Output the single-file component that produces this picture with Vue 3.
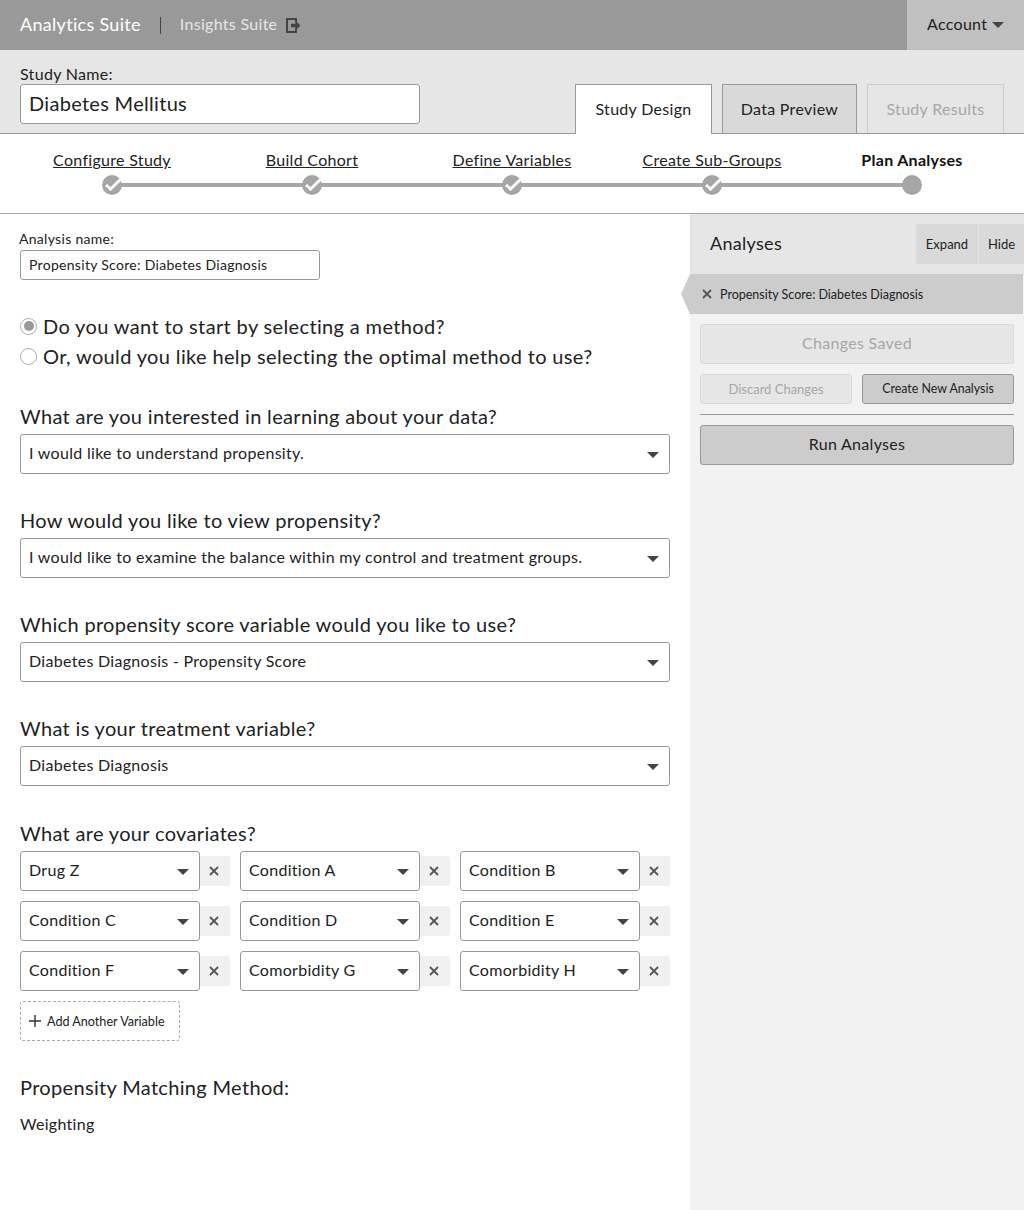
<template>
  <div class="page">
    <header class="topbar">
      <span class="brand">Analytics Suite</span>
      <span class="divider"></span>
      <a class="suite-link">Insights Suite</a>
      <svg class="exit-icon" width="15" height="15" viewBox="0 0 15 15">
        <path d="M10 4.500V1H1v13h9v-3.500" fill="none" stroke="#444" stroke-width="2" />
        <path d="M5 5.800h4.500V2.800L14.500 7.500l-5 4.700V9.200H5z" fill="#444" />
      </svg>
      <div class="account">Account <span class="account-caret"></span></div>
    </header>

    <section class="study-bar">
      <div class="study-name">
        <label>Study Name:</label>
        <div class="study-input">Diabetes Mellitus</div>
      </div>
      <nav class="tabs">
        <div v-for="tab in tabs" :key="tab.label" class="tab" :class="tab.kind">{{ tab.label }}</div>
      </nav>
    </section>

    <section class="stepper">
      <div v-for="(step, i) in steps" :key="step" class="step" :class="{ current: i === steps.length - 1 }">
        <span class="step-label">{{ step }}</span>
        <span class="step-dot">
          <svg v-if="i < steps.length - 1" width="20" height="20" viewBox="0 0 20 20">
            <path d="M4 10l4.500 4 10-9.500" fill="none" stroke="#fff" stroke-width="3" />
          </svg>
        </span>
      </div>
    </section>

    <div class="main">
      <section class="form">
        <label class="small-label">Analysis name:</label>
        <div class="name-input">Propensity Score: Diabetes Diagnosis</div>

        <div class="radios">
          <div class="radio-row"><span class="radio on"></span>Do you want to start by selecting a method?</div>
          <div class="radio-row"><span class="radio"></span>Or, would you like help selecting the optimal method to use?</div>
        </div>

        <div v-for="q in questions" :key="q.label" class="question">
          <div class="q-label">{{ q.label }}</div>
          <div class="select">
            <span>{{ q.value }}</span>
            <span class="caret"></span>
          </div>
        </div>

        <div class="q-label covariate-label">What are your covariates?</div>
        <div class="covariates">
          <div v-for="c in covariates" :key="c" class="covariate">
            <div class="select">
              <span>{{ c }}</span>
              <span class="caret"></span>
            </div>
            <div class="remove">
              <svg width="10" height="10" viewBox="0 0 10 10">
                <path d="M1 1l8 8M9 1l-8 8" stroke="#555" stroke-width="1.800" />
              </svg>
            </div>
          </div>
        </div>
        <div class="add-var">
          <svg width="14" height="14" viewBox="0 0 14 14">
            <path d="M7 1v12M1 7h12" stroke="#333" stroke-width="1.400" />
          </svg>
          <span>Add Another Variable</span>
        </div>

        <div class="q-label method-label">Propensity Matching Method:</div>
        <div class="method-value">Weighting</div>
      </section>

      <aside class="sidebar">
        <div class="side-head">
          <span class="side-title">Analyses</span>
          <div class="side-btn expand">Expand</div>
          <div class="side-btn hide">Hide</div>
        </div>
        <div class="active-analysis">
          <svg width="10" height="10" viewBox="0 0 10 10">
            <path d="M1 1l8 8M9 1l-8 8" stroke="#555" stroke-width="1.800" />
          </svg>
          <span>Propensity Score: Diabetes Diagnosis</span>
        </div>
        <div class="side-body">
          <div class="btn big disabled">Changes Saved</div>
          <div class="btn-row">
            <div class="btn small disabled">Discard Changes</div>
            <div class="btn small create">Create New Analysis</div>
          </div>
          <div class="side-rule"></div>
          <div class="btn big">Run Analyses</div>
        </div>
      </aside>
    </div>
  </div>
</template>

<script setup>
const tabs = [
  { label: 'Study Design', kind: 'active' },
  { label: 'Data Preview', kind: 'normal' },
  { label: 'Study Results', kind: 'off' }
]

const steps = ['Configure Study', 'Build Cohort', 'Define Variables', 'Create Sub-Groups', 'Plan Analyses']

const questions = [
  { label: 'What are you interested in learning about your data?', value: 'I would like to understand propensity.' },
  { label: 'How would you like to view propensity?', value: 'I would like to examine the balance within my control and treatment groups.' },
  { label: 'Which propensity score variable would you like to use?', value: 'Diabetes Diagnosis - Propensity Score' },
  { label: 'What is your treatment variable?', value: 'Diabetes Diagnosis' }
]

const covariates = [
  'Drug Z', 'Condition A', 'Condition B',
  'Condition C', 'Condition D', 'Condition E',
  'Condition F', 'Comorbidity G', 'Comorbidity H'
]
</script>

<style>
body {
  margin: 0;
}
</style>

<style scoped>
.page {
  width: 1024px;
  height: 1210px;
  display: flex;
  flex-direction: column;
  overflow: hidden;
  font-family: Lato, "Liberation Sans", sans-serif;
  letter-spacing: 0.3px;
  color: #222;
  background: #fff;
}

.topbar {
  height: 50px;
  flex: none;
  display: flex;
  align-items: center;
  padding-left: 20px;
  background: #999;
}

.brand {
  font-size: 18px;
  color: #fff;
  margin-bottom: 2px;
}

.divider {
  width: 1px;
  height: 17px;
  margin: 0 19px;
  background: #444;
}

.suite-link {
  font-size: 16px;
  color: #e6e6e6;
  margin-bottom: 4px;
}

.exit-icon {
  margin-left: 9px;
}

.account {
  margin-left: auto;
  width: 117px;
  height: 50px;
  box-sizing: border-box;
  padding: 0 0 3px 20px;
  display: flex;
  align-items: center;
  gap: 5px;
  font-size: 16px;
  background: #c0c0c0;
}

.account-caret {
  margin-top: 3px;
  border-top: 6px solid #444;
  border-left: 6px solid transparent;
  border-right: 6px solid transparent;
}

.study-bar {
  height: 84px;
  flex: none;
  box-sizing: border-box;
  display: flex;
  justify-content: space-between;
  align-items: flex-end;
  padding: 0 20px;
  background: #e6e6e6;
  border-bottom: 1px solid #999;
}

.study-name {
  margin-bottom: 9px;
}

.study-name label {
  display: block;
  font-size: 16px;
  line-height: 20px;
}

.study-input {
  width: 400px;
  height: 40px;
  box-sizing: border-box;
  padding-left: 8px;
  line-height: 36px;
  font-size: 20px;
  background: #fff;
  border: 1px solid #999;
  border-radius: 3px;
}

.tabs {
  display: flex;
  gap: 10px;
}

.tab {
  width: 137px;
  height: 49px;
  box-sizing: border-box;
  text-align: center;
  line-height: 47px;
  font-size: 16px;
  border: 1px solid #999;
  border-bottom: none;
}

.tab.active {
  height: 50px;
  margin-bottom: -1px;
  background: #fff;
}

.tab.normal {
  width: 135px;
  background: #d9d9d9;
}

.tab.off {
  color: #a6a6a6;
  border-color: #ccc;
}

.stepper {
  height: 80px;
  flex: none;
  box-sizing: border-box;
  display: flex;
  padding: 15px 12px 0;
  border-bottom: 1px solid #aaa;
}

.step {
  position: relative;
  width: 200px;
  display: flex;
  flex-direction: column;
  align-items: center;
  gap: 4px;
}

.step-label {
  font-size: 16px;
  line-height: 22px;
  text-decoration: underline;
}

.step.current .step-label {
  font-weight: 700;
  color: #111;
  text-decoration: none;
}

.step-dot {
  position: relative;
  z-index: 1;
  width: 20px;
  height: 20px;
  border-radius: 50%;
  background: #a6a6a6;
}

.step-dot svg {
  display: block;
}

/* connector between two dots */
.step:not(.current)::after {
  content: '';
  position: absolute;
  top: 34px;
  left: 50%;
  width: 200px;
  height: 4px;
  background: #a6a6a6;
}

.main {
  flex: 1;
  display: flex;
  min-height: 0;
}

.form {
  width: 690px;
  flex: none;
  box-sizing: border-box;
  padding: 15px 20px 0;
}

.small-label {
  display: block;
  font-size: 14px;
  line-height: 19px;
  margin-bottom: 2px;
  margin-left: -1px;
}

.name-input {
  width: 300px;
  height: 30px;
  box-sizing: border-box;
  padding-left: 8px;
  line-height: 28px;
  font-size: 14px;
  border: 1px solid #999;
  border-radius: 3px;
}

.radios {
  margin: 31px 0 33px;
}

.radio-row {
  display: flex;
  align-items: center;
  gap: 6px;
  height: 30px;
  font-size: 20px;
  letter-spacing: 0.36px;
}

.radio {
  width: 15px;
  height: 15px;
  flex: none;
  border: 1px solid #aaa;
  border-radius: 50%;
  background: #fff;
  position: relative;
}

.radio.on::after {
  content: '';
  position: absolute;
  inset: 2.500px;
  border-radius: 50%;
  background: #999;
}

.question {
  height: 104px;
}

.q-label {
  font-size: 20px;
  line-height: 24px;
  margin-bottom: 6px;
  letter-spacing: 0.33px;
}

.select {
  height: 40px;
  box-sizing: border-box;
  display: flex;
  align-items: center;
  justify-content: space-between;
  padding: 0 10px 4px 8px;
  font-size: 16px;
  background: #fff;
  border: 1px solid #999;
  border-radius: 3px;
}

.caret {
  flex: none;
  margin-top: 6px;
  border-top: 6px solid #444;
  border-left: 6px solid transparent;
  border-right: 6px solid transparent;
}

.covariate-label {
  margin-top: 1px;
}

.covariates {
  display: grid;
  grid-template-columns: repeat(3, 210px);
  gap: 10px;
}

.covariate {
  display: flex;
  align-items: center;
}

.covariate .select {
  width: 180px;
  flex: none;
}

.remove {
  width: 30px;
  height: 30px;
  box-sizing: border-box;
  padding-right: 3px;
  display: flex;
  align-items: center;
  justify-content: center;
  background: #f0f0f0;
  border-radius: 0 3px 3px 0;
}

.add-var {
  width: 160px;
  height: 40px;
  box-sizing: border-box;
  margin-top: 10px;
  padding-left: 7px;
  display: flex;
  align-items: center;
  gap: 5px;
  font-size: 12.600px;
  letter-spacing: 0;
  border: 1px dashed #aaa;
  border-radius: 3px;
}

.method-label {
  margin: 34px 0 0;
}

.method-value {
  margin-top: 15px;
  font-size: 16px;
  line-height: 20px;
}

.sidebar {
  flex: 1;
  background: #f2f2f2;
}

.side-head {
  height: 60px;
  display: flex;
  align-items: center;
  padding-left: 20px;
  background: #e6e6e6;
}

.side-title {
  margin-right: auto;
  margin-bottom: 2px;
  font-size: 18px;
}

.side-btn {
  height: 40px;
  line-height: 40px;
  text-align: center;
  font-size: 13px;
  letter-spacing: 0;
  background: #d9d9d9;
}

.side-btn.expand {
  width: 62px;
  margin-right: 1px;
}

.side-btn.hide {
  width: 45px;
}

.active-analysis {
  height: 40px;
  margin-left: -9px;
  margin-right: 1px;
  display: flex;
  align-items: center;
  gap: 8px;
  padding-left: 21px;
  font-size: 12.500px;
  letter-spacing: 0;
  background: #ccc;
  clip-path: polygon(9px 0, 100% 0, 100% 100%, 9px 100%, 0 50%);
}

.side-body {
  padding: 10px 10px 0;
}

.btn {
  box-sizing: border-box;
  text-align: center;
  background: #ccc;
  border: 1px solid #999;
  border-radius: 3px;
}

.btn.big {
  height: 40px;
  line-height: 36px;
  font-size: 16px;
}

.btn.small {
  flex: 1;
  height: 30px;
  line-height: 28px;
  font-size: 13px;
  letter-spacing: 0;
}

.btn.small.create {
  font-size: 12.400px;
}

.btn.disabled {
  color: #a6a6a6;
  background: #e6e6e6;
  border-color: #d9d9d9;
}

.btn-row {
  display: flex;
  gap: 10px;
  margin-top: 10px;
}

.side-rule {
  height: 1px;
  margin: 10px 0;
  background: #999;
}
</style>
